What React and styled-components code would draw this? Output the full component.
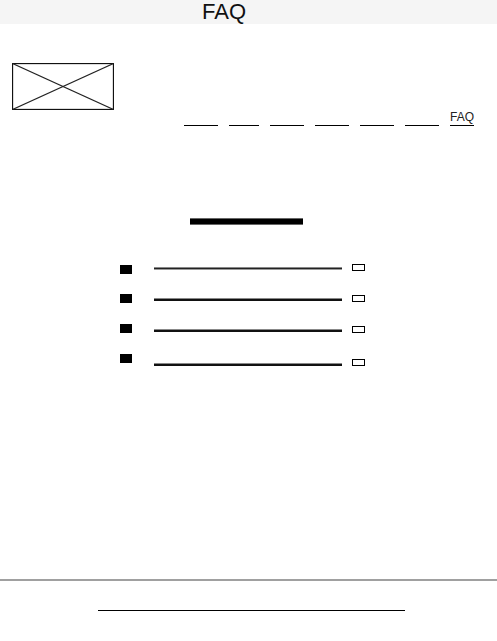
import React from 'react';
import styled, { createGlobalStyle } from 'styled-components';

const GlobalStyle = createGlobalStyle`
  html, body {
    margin: 0;
    padding: 0;
    background: #fff;
    font-family: "Liberation Sans", Arial, sans-serif;
  }
`;

const navWidths = [34, 30, 34, 34, 34, 34];

const squares = [2, 20, 21, 21];
const lines = [4, 28, 28, 31];
const boxes = [1, 24, 24, 26];

export default function App() {
  return (
    <Page>
      <GlobalStyle />
      <Header>FAQ</Header>

      <TopBar>
        <Logo width="102" height="47" viewBox="0 0 102 47">
          <rect x="0.5" y="0.5" width="101" height="46" fill="none" stroke="#111" strokeWidth="1.3" />
          <line x1="0.5" y1="0.5" x2="101.5" y2="46.5" stroke="#222" strokeWidth="1.2" />
          <line x1="0.5" y1="46.5" x2="101.5" y2="0.5" stroke="#222" strokeWidth="1.2" />
        </Logo>
        <Nav>
          {navWidths.map((w, i) => (
            <NavLink key={i} $width={w} />
          ))}
          <NavText>FAQ</NavText>
        </Nav>
      </TopBar>

      <Main>
        <TitleBar />
        <List>
          <SquareCol>
            {squares.map((g, i) => (
              <Square key={i} $gap={g} />
            ))}
          </SquareCol>
          <LineCol>
            {lines.map((g, i) => (
              <Rule key={i} $gap={g} $light={i === 0} />
            ))}
          </LineCol>
          <BoxCol>
            {boxes.map((g, i) => (
              <Check key={i} $gap={g} />
            ))}
          </BoxCol>
        </List>
      </Main>

      <Footer>
        <FooterLine />
      </Footer>
    </Page>
  );
}

const Page = styled.div`
  min-height: 100vh;
  display: flex;
  flex-direction: column;
`;

const Header = styled.div`
  height: 24px;
  background: #f5f5f5;
  padding-left: 202px;
  font-size: 22px;
  line-height: 23px;
  color: #111;
`;

const TopBar = styled.div`
  display: flex;
  align-items: flex-start;
  padding: 39px 23px 0 12px;
`;

const Logo = styled.svg`
  display: block;
`;

const Nav = styled.div`
  display: flex;
  gap: 11px;
  margin-left: auto;
  margin-top: 50px;
`;

const NavLink = styled.span`
  width: ${(p) => p.$width}px;
  height: 12px;
  border-bottom: 1px solid #000;
`;

const NavText = styled.span`
  font-size: 12px;
  line-height: 8px;
  padding-bottom: 4px;
  color: #222;
  border-bottom: 1px solid #000;
`;

const Main = styled.div`
  padding-top: 92px;
`;

const TitleBar = styled.div`
  box-sizing: border-box;
  width: 113px;
  height: 7px;
  margin-left: 190px;
  background: #000;
  border-top: 1px solid #666;
  border-bottom: 1px solid #666;
`;

const List = styled.div`
  display: flex;
  margin-top: 38px;
  padding-left: 120px;
`;

const SquareCol = styled.div`
  display: flex;
  flex-direction: column;
  width: 12px;
  margin-right: 22px;
`;

const Square = styled.div`
  width: 12px;
  height: 9px;
  margin-top: ${(p) => p.$gap}px;
  background: #000;
`;

const LineCol = styled.div`
  display: flex;
  flex-direction: column;
  width: 188px;
  margin-right: 10px;
`;

const Rule = styled.div`
  box-sizing: border-box;
  height: 3px;
  margin-top: ${(p) => p.$gap}px;
  background: ${(p) => (p.$light ? '#222' : '#111')};
  border-top: 1px solid #888;
  border-bottom: ${(p) => (p.$light ? '1px solid #999' : '0')};
`;

const BoxCol = styled.div`
  display: flex;
  flex-direction: column;
`;

const Check = styled.div`
  box-sizing: border-box;
  width: 13px;
  height: 7px;
  margin-top: ${(p) => p.$gap}px;
  border: 1px solid #000;
`;

const Footer = styled.div`
  margin-top: auto;
  border-top: 2px solid #a0a0a0;
  padding: 29px 0 30px;
`;

const FooterLine = styled.div`
  width: 307px;
  height: 1px;
  margin-left: 98px;
  background: #000;
`;
